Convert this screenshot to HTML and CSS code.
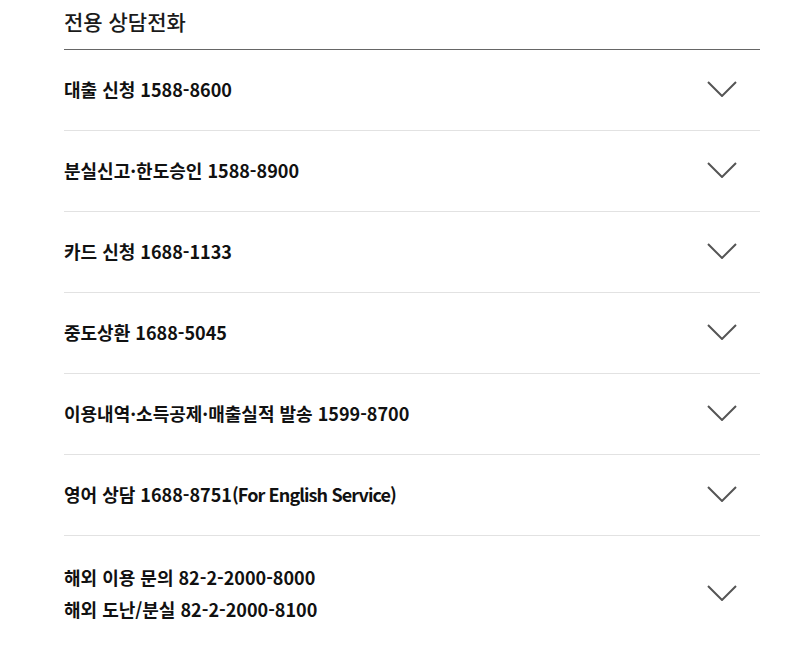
FILE: index.html
```html
<!DOCTYPE html>
<html lang="ko">
<head>
<meta charset="utf-8">
<link rel="stylesheet" href="styles.css">
</head>
<body>
<section class="panel">
  <h2 class="title">전용 상담전화</h2>
  <ul class="list">
    <li class="row"><span class="label">대출 신청 1588-8600</span><svg class="chev" viewBox="0 0 30 16"><polyline points="1,1 15,15 29,1"/></svg></li>
    <li class="row"><span class="label">분실신고·한도승인 1588-8900</span><svg class="chev" viewBox="0 0 30 16"><polyline points="1,1 15,15 29,1"/></svg></li>
    <li class="row"><span class="label">카드 신청 1688-1133</span><svg class="chev" viewBox="0 0 30 16"><polyline points="1,1 15,15 29,1"/></svg></li>
    <li class="row"><span class="label">중도상환 1688-5045</span><svg class="chev" viewBox="0 0 30 16"><polyline points="1,1 15,15 29,1"/></svg></li>
    <li class="row"><span class="label">이용내역·소득공제·매출실적 발송 1599-8700</span><svg class="chev" viewBox="0 0 30 16"><polyline points="1,1 15,15 29,1"/></svg></li>
    <li class="row"><span class="label">영어 상담 1688-8751<span class="en">(For English Service)</span></span><svg class="chev" viewBox="0 0 30 16"><polyline points="1,1 15,15 29,1"/></svg></li>
    <li class="row row-multi"><span class="label">해외 이용 문의 82-2-2000-8000<br>해외 도난/분실 82-2-2000-8100</span><svg class="chev" viewBox="0 0 30 16"><polyline points="1,1 15,15 29,1"/></svg></li>
  </ul>
</section>
</body>
</html>
```
FILE: styles.css
```css
html, body {
  margin: 0;
  padding: 0;
  background: #fff;
}
body {
  font-family: "Noto Sans CJK KR", "Noto Sans", sans-serif;
  color: #111;
}
.panel {
  width: 696px;
  margin-left: 64px;
}
.title {
  margin: 0;
  height: 50px;
  box-sizing: border-box;
  font-size: 21px;
  font-weight: 500;
  line-height: 43px;
  border-bottom: 1px solid #666;
  color: #1a1a1a;
}
.list {
  list-style: none;
  margin: 0;
  padding: 0;
}
.row {
  height: 81px;
  box-sizing: border-box;
  border-bottom: 1px solid #e2e2e2;
  display: flex;
  align-items: center;
  justify-content: space-between;
  padding-right: 23px;
  padding-bottom: 2px;
}
.row-multi {
  height: auto;
  padding-top: 25px;
  padding-bottom: 26px;
  border-bottom: none;
}
.label {
  font-size: 18px;
  font-weight: 700;
  line-height: 32px;
}
.en {
  letter-spacing: -0.9px;
}
.chev {
  width: 30px;
  height: 16px;
  fill: none;
  stroke: #555;
  stroke-width: 2;
}
```
